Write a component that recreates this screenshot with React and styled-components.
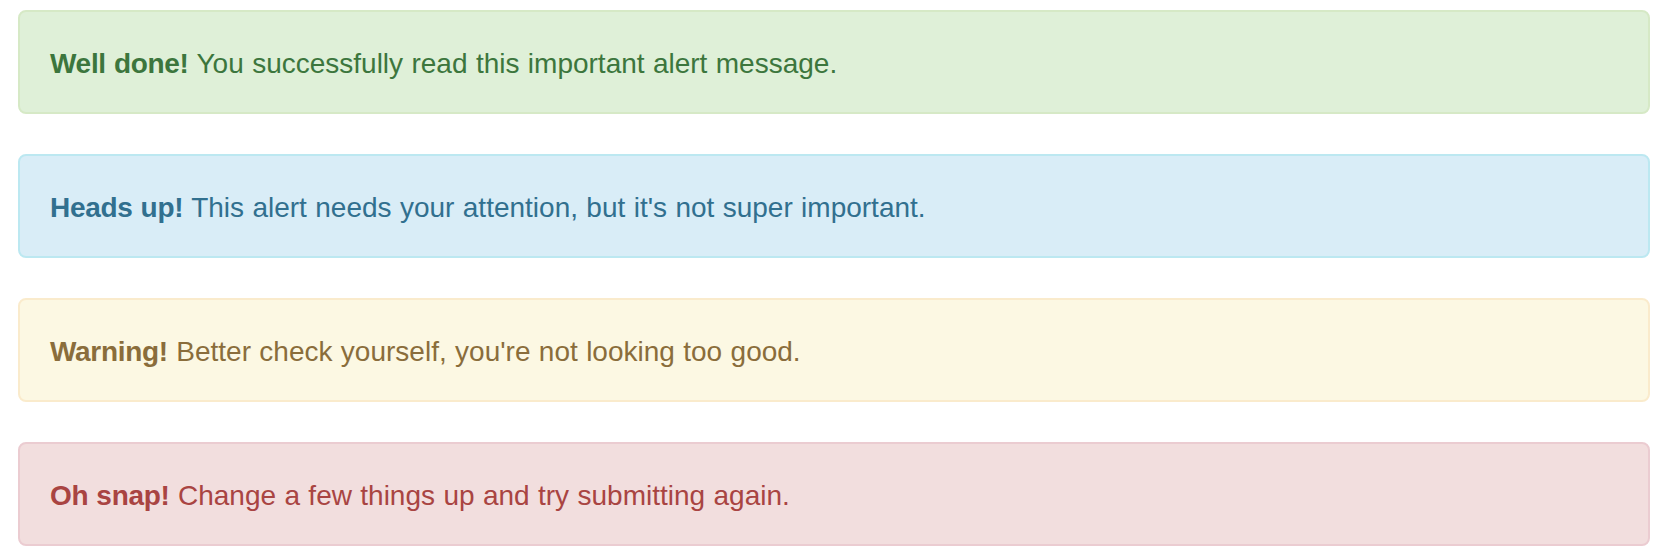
import React from 'react'
import styled, { createGlobalStyle } from 'styled-components'

const GlobalStyle = createGlobalStyle`
  body {
    margin: 0;
    background: #fff;
    font-family: "Liberation Sans", Arial, Helvetica, sans-serif;
  }
`

const tones = {
  success: { bg: '#dff0d8', border: '#d6e9c6', text: '#3c763d' },
  info: { bg: '#d9edf7', border: '#bce8f1', text: '#31708f' },
  warning: { bg: '#fcf8e3', border: '#faebcc', text: '#8a6d3b' },
  danger: { bg: '#f2dede', border: '#ebccd1', text: '#a94442' }
}

const Page = styled.div`
  display: flex;
  flex-direction: column;
  gap: 40px;
  padding: 10px 16px 0 18px;
`

const Alert = styled.div`
  padding: 32px 30px 28px;
  border: 2px solid ${p => tones[p.$tone].border};
  border-radius: 8px;
  background: ${p => tones[p.$tone].bg};
  color: ${p => tones[p.$tone].text};
  font-size: 28px;
  line-height: 40px;
  word-spacing: 0.6px;

  strong {
    font-weight: bold;
    letter-spacing: -0.3px;
  }
`

const alerts = [
  { tone: 'success', title: 'Well done!', text: 'You successfully read this important alert message.' },
  { tone: 'info', title: 'Heads up!', text: "This alert needs your attention, but it's not super important." },
  { tone: 'warning', title: 'Warning!', text: "Better check yourself, you're not looking too good." },
  { tone: 'danger', title: 'Oh snap!', text: 'Change a few things up and try submitting again.' }
]

const App = () => (
  <>
    <GlobalStyle />
    <Page>
      {alerts.map(a => (
        <Alert key={a.tone} $tone={a.tone}>
          <strong>{a.title}</strong> {a.text}
        </Alert>
      ))}
    </Page>
  </>
)

export default App
